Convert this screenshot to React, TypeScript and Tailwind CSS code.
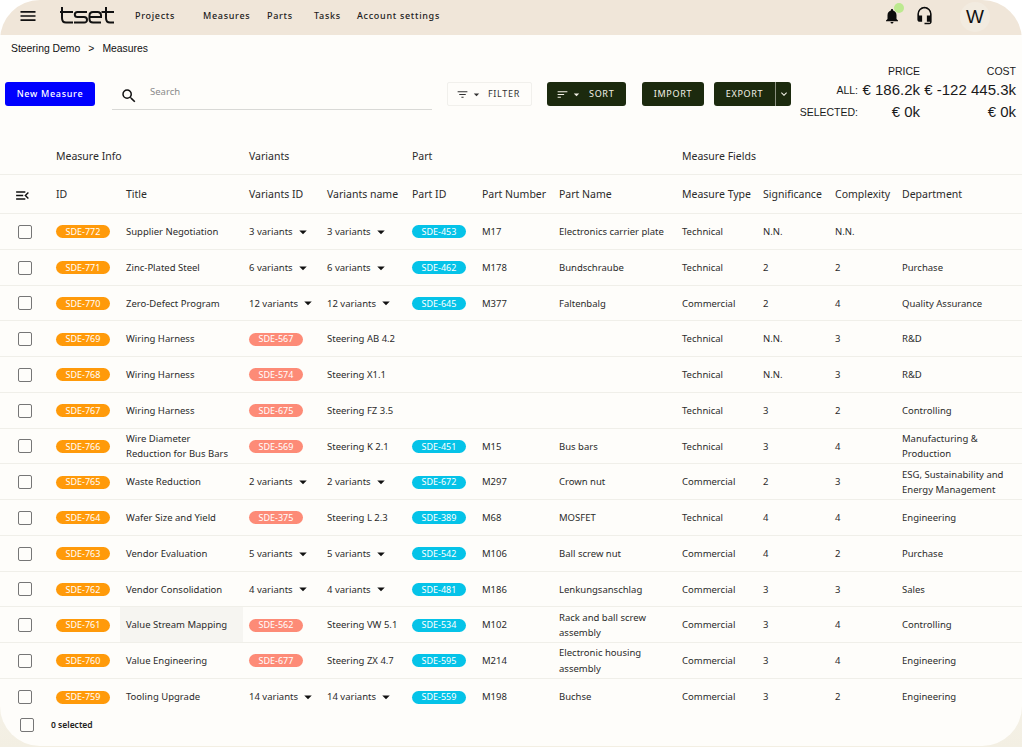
import { MdArrowDropDown, MdExpandMore, MdFilterList, MdHeadsetMic, MdMenu, MdMenuOpen, MdNotifications, MdSearch, MdSort } from 'react-icons/md';

type Row = {
  id: string;
  title: string;
  variantId: string;
  variantName: string;
  partId?: string;
  partNumber?: string;
  partName?: string;
  type: string;
  significance: string;
  complexity: string;
  department?: string;
  hover?: boolean;
};

const rows: Row[] = [
  { id: 'SDE-772', title: 'Supplier Negotiation', variantId: '3 variants', variantName: '3 variants', partId: 'SDE-453', partNumber: 'M17', partName: 'Electronics carrier plate', type: 'Technical', significance: 'N.N.', complexity: 'N.N.' },
  { id: 'SDE-771', title: 'Zinc-Plated Steel', variantId: '6 variants', variantName: '6 variants', partId: 'SDE-462', partNumber: 'M178', partName: 'Bundschraube', type: 'Technical', significance: '2', complexity: '2', department: 'Purchase' },
  { id: 'SDE-770', title: 'Zero-Defect Program', variantId: '12 variants', variantName: '12 variants', partId: 'SDE-645', partNumber: 'M377', partName: 'Faltenbalg', type: 'Commercial', significance: '2', complexity: '4', department: 'Quality Assurance' },
  { id: 'SDE-769', title: 'Wiring Harness', variantId: 'SDE-567', variantName: 'Steering AB 4.2', type: 'Technical', significance: 'N.N.', complexity: '3', department: 'R&D' },
  { id: 'SDE-768', title: 'Wiring Harness', variantId: 'SDE-574', variantName: 'Steering X1.1', type: 'Technical', significance: 'N.N.', complexity: '3', department: 'R&D' },
  { id: 'SDE-767', title: 'Wiring Harness', variantId: 'SDE-675', variantName: 'Steering FZ 3.5', type: 'Technical', significance: '3', complexity: '2', department: 'Controlling' },
  { id: 'SDE-766', title: 'Wire Diameter Reduction for Bus Bars', variantId: 'SDE-569', variantName: 'Steering K 2.1', partId: 'SDE-451', partNumber: 'M15', partName: 'Bus bars', type: 'Technical', significance: '3', complexity: '4', department: 'Manufacturing & Production' },
  { id: 'SDE-765', title: 'Waste Reduction', variantId: '2 variants', variantName: '2 variants', partId: 'SDE-672', partNumber: 'M297', partName: 'Crown nut', type: 'Commercial', significance: '2', complexity: '3', department: 'ESG, Sustainability and Energy Management' },
  { id: 'SDE-764', title: 'Wafer Size and Yield', variantId: 'SDE-375', variantName: 'Steering L 2.3', partId: 'SDE-389', partNumber: 'M68', partName: 'MOSFET', type: 'Technical', significance: '4', complexity: '4', department: 'Engineering' },
  { id: 'SDE-763', title: 'Vendor Evaluation', variantId: '5 variants', variantName: '5 variants', partId: 'SDE-542', partNumber: 'M106', partName: 'Ball screw nut', type: 'Commercial', significance: '4', complexity: '2', department: 'Purchase' },
  { id: 'SDE-762', title: 'Vendor Consolidation', variantId: '4 variants', variantName: '4 variants', partId: 'SDE-481', partNumber: 'M186', partName: 'Lenkungsanschlag', type: 'Commercial', significance: '3', complexity: '3', department: 'Sales' },
  { id: 'SDE-761', title: 'Value Stream Mapping', variantId: 'SDE-562', variantName: 'Steering VW 5.1', partId: 'SDE-534', partNumber: 'M102', partName: 'Rack and ball screw assembly', type: 'Commercial', significance: '3', complexity: '4', department: 'Controlling', hover: true },
  { id: 'SDE-760', title: 'Value Engineering', variantId: 'SDE-677', variantName: 'Steering ZX 4.7', partId: 'SDE-595', partNumber: 'M214', partName: 'Electronic housing assembly', type: 'Commercial', significance: '3', complexity: '4', department: 'Engineering' },
  { id: 'SDE-759', title: 'Tooling Upgrade', variantId: '14 variants', variantName: '14 variants', partId: 'SDE-559', partNumber: 'M198', partName: 'Buchse', type: 'Commercial', significance: '3', complexity: '2', department: 'Engineering' },
];

const gridCols = 'grid grid-cols-[50px_70px_123px_78px_85px_70px_77px_123px_81px_72px_67px_1fr]';

function Pill({ text, color }: { text: string; color: string }) {
  return (
    <span className={`flex h-[13px] w-[54px] items-center justify-center rounded-full text-[9px] text-[#fff] ${color}`}>
      {text}
    </span>
  );
}

function Checkbox() {
  return <span className="block h-[14px] w-[14px] rounded-[2px] border-[1.5px] border-[#767676]" />;
}

function Cell({ children, className = '' }: { children?: React.ReactNode; className?: string }) {
  return <div className={`flex items-center pl-1.5 ${className}`}>{children}</div>;
}

function VariantCell({ value }: { value: string }) {
  if (value.startsWith('SDE')) return <Pill text={value} color="bg-[#fd8b77]" />;
  if (!value.includes('variants')) return <span>{value}</span>;
  return (
    <span className="flex items-center">
      {value}
      <MdArrowDropDown className="ml-[1px] h-[18px] w-[18px] text-[#111]" />
    </span>
  );
}

function Logo() {
  return (
    <svg viewBox="0 0 54 17" className="h-[17px] w-[54px]" fill="none" stroke="#111" strokeWidth="2">
      <path d="M2 0v11q0 4.5 4 4.5h7" />
      <path d="M0 5h13" />
      <path d="M27 5h-9.5q-2.7 0-2.7 2.5t2.7 2.5h6.5q3 0 3 2.8t-3 2.7h-10" />
      <path d="M41 15.5h-8q-3.5 0-3.5-3.5v-3.500q0-3.500 3.500-3.500h4.500q3.500 0 3.500 3.500v1.500h-11.500" />
      <path d="M46 0v11q0 4.500 4 4.500h4" />
      <path d="M41.500 5h12.500" />
    </svg>
  );
}

export default function App() {
  return (
    <div className="h-[747px] w-[1022px] overflow-hidden bg-[linear-gradient(#ffffff_0%,#ffffff_50%,#f3efe3_100%)] font-['Noto_Sans',sans-serif] text-[#2b2b2b]">
      <div className="flex h-[746px] flex-col overflow-hidden rounded-[40px] bg-[#fefdfa]">
        {/* top bar */}
        <header className="flex h-[35px] shrink-0 items-center bg-[#f0e6d9] pb-[4px] text-[9px] tracking-[0.7px] text-[#1c1c1c]">
          <MdMenu className="ml-[18px] h-[20px] w-[20px] text-[#111]" />
          <div className="ml-[22px]">
            <Logo />
          </div>
          <nav className="ml-[21px] flex font-medium">
            <a className="w-[68px]">Projects</a>
            <a className="w-[64px]">Measures</a>
            <a className="w-[47px]">Parts</a>
            <a className="w-[43px]">Tasks</a>
            <a>Account settings</a>
          </nav>
          <div className="ml-auto flex items-center">
            <span className="relative">
              <MdNotifications className="h-[18px] w-[18px] text-[#0c0c0c]" />
              <span className="absolute -top-[4px] left-[11px] h-[10px] w-[10px] rounded-full bg-[#bce98f]" />
            </span>
            <MdHeadsetMic className="ml-[14px] h-[19px] w-[19px] text-[#0c0c0c]" />
            <span className="ml-[26px] mr-[32px] mt-[3px] flex h-[30px] w-[30px] items-center justify-center rounded-full bg-[#f2ebe0] font-['Liberation_Sans',sans-serif] text-[19px] tracking-normal text-[#111]">
              W
            </span>
          </div>
        </header>

        {/* breadcrumb */}
        <div className="flex h-[26px] shrink-0 items-center gap-[8px] pl-[11px] pt-px font-['Liberation_Sans',sans-serif] text-[10.400px] text-[#111]">
          <span>Steering Demo</span>
          <span>&gt;</span>
          <span>Measures</span>
        </div>

        {/* toolbar */}
        <div className="flex h-[79px] shrink-0 items-start pl-[5px] pr-[6px] pt-[21px] text-[9px] tracking-[0.7px]">
          <button className="flex h-[24px] w-[90px] items-center justify-center rounded-[3px] bg-[#0000ff] font-medium text-white">
            New Measure
          </button>
          <div className="relative ml-[17px] flex h-[28px] w-[320px] border-b border-[#d9d9d6] pl-[38px] pt-[3px] text-[9.500px] tracking-normal text-[#8a8a8a]">
            <MdSearch className="absolute left-[8px] top-[5px] h-[18px] w-[18px] text-[#111]" />
            Search
          </div>
          <button className="ml-[15px] flex h-[24px] w-[85px] items-center rounded-[2px] border border-[#f1f0ec] pl-[8px] text-[#333]">
            <MdFilterList className="h-[13px] w-[13px]" />
            <MdArrowDropDown className="ml-[1px] h-[13px] w-[13px]" />
            <span className="ml-[5px]">FILTER</span>
          </button>
          <button className="ml-[15px] flex h-[24px] w-[79px] items-center rounded-[3px] bg-[#1c2a0e] pl-[9px] text-[#f3f1e6]">
            <MdSort className="h-[13px] w-[13px]" />
            <MdArrowDropDown className="ml-[1px] h-[13px] w-[13px]" />
            <span className="ml-[6px]">SORT</span>
          </button>
          <button className="ml-[16px] flex h-[24px] w-[62px] items-center justify-center rounded-[3px] bg-[#1c2a0e] text-[#f3f1e6]">
            IMPORT
          </button>
          <div className="ml-[10px] flex h-[24px] overflow-hidden rounded-[3px] bg-[#1c2a0e] text-[#f3f1e6]">
            <button className="flex w-[61px] items-center justify-center">EXPORT</button>
            <button className="flex w-[16px] items-center justify-center border-l border-[#8b9080]">
              <MdExpandMore className="h-[12px] w-[12px]" />
            </button>
          </div>
          <div className="-mt-[19px] ml-auto grid grid-cols-[auto_58px_96px] items-center justify-end font-['Liberation_Sans',sans-serif] tracking-normal text-[#1a1a1a]">
            <span />
            <span className="text-right text-[10.500px] leading-[16px]">PRICE</span>
            <span className="text-right text-[10.500px] leading-[16px]">COST</span>
            <span className="mr-[4px] text-right text-[10.500px] leading-[22px]">ALL:</span>
            <span className="whitespace-nowrap text-right text-[15px] leading-[22px]">€ 186.2k</span>
            <span className="whitespace-nowrap text-right text-[15px] leading-[22px]">€ -122 445.3k</span>
            <span className="mr-[4px] text-right text-[10.500px] leading-[22px]">SELECTED:</span>
            <span className="text-right text-[15px] leading-[22px]">€ 0k</span>
            <span className="text-right text-[15px] leading-[22px]">€ 0k</span>
          </div>
        </div>

        {/* table head */}
        <div className={`${gridCols} h-[35px] shrink-0 border-b border-[#f0efe9] text-[10.500px]`}>
          <div />
          <Cell className="col-span-2">Measure Info</Cell>
          <Cell className="col-span-2">Variants</Cell>
          <Cell className="col-span-3">Part</Cell>
          <Cell className="col-span-4">Measure Fields</Cell>
        </div>
        <div className={`${gridCols} h-[39px] shrink-0 border-b border-[#f0efe9] pt-[2px] text-[10.500px]`}>
          <div className="flex items-center pl-[14px]">
            <MdMenuOpen className="h-[17px] w-[17px] text-[#111]" />
          </div>
          <Cell>ID</Cell>
          <Cell>Title</Cell>
          <Cell>Variants ID</Cell>
          <Cell>Variants name</Cell>
          <Cell>Part ID</Cell>
          <Cell>Part Number</Cell>
          <Cell>Part Name</Cell>
          <Cell>Measure Type</Cell>
          <Cell>Significance</Cell>
          <Cell>Complexity</Cell>
          <Cell>Department</Cell>
        </div>

        {/* table rows */}
        <div className="flex-1 overflow-hidden">
          {rows.map((row) => (
            <div key={row.id} className={`${gridCols} h-[35.75px] border-b border-[#f0efe9] pt-px text-[9.500px] leading-[15.500px] last:border-b-0`}>
              <div className="flex items-center pl-[18px]">
                <Checkbox />
              </div>
              <Cell>
                <Pill text={row.id} color="bg-[#ff9a0a]" />
              </Cell>
              <Cell className={row.hover ? '-mt-px bg-[#f6f5f1] pr-2' : 'pr-2'}>{row.title}</Cell>
              <Cell>
                <VariantCell value={row.variantId} />
              </Cell>
              <Cell>
                <VariantCell value={row.variantName} />
              </Cell>
              <Cell>{row.partId && <Pill text={row.partId} color="bg-[#05c3e8]" />}</Cell>
              <Cell>{row.partNumber}</Cell>
              <Cell>{row.partName}</Cell>
              <Cell>{row.type}</Cell>
              <Cell>{row.significance}</Cell>
              <Cell>{row.complexity}</Cell>
              <Cell>{row.department}</Cell>
            </div>
          ))}
        </div>

        {/* footer */}
        <div className="flex h-[31px] shrink-0 items-start pl-[20px] pt-[3px]">
          <Checkbox />
          <span className="ml-[17px] mt-[1px] text-[8.500px] font-semibold text-[#222]">0 selected</span>
        </div>
      </div>
    </div>
  );
}
